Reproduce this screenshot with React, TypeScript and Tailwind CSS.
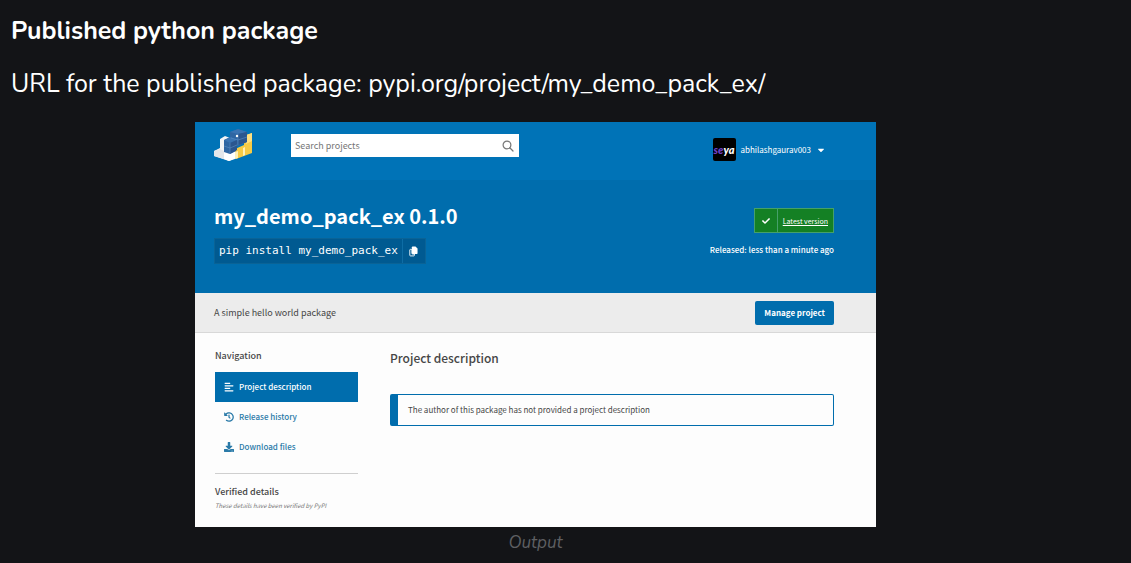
import type { ReactNode } from "react";
import { FaAlignLeft, FaCaretDown, FaCheck, FaDownload, FaHistory } from "react-icons/fa";

function PyPILogo() {
  return (
    <svg viewBox="0 0 40 34" className="h-[34px] w-10 shrink-0" aria-label="PyPI" role="img">
      <path d="M1 23 L7 20 V11 L12 8 L22 12 V31 L16 33 L1 28Z" fill="#f3f4f6" />
      <path d="M1 23 L7 21 L11 23 V31 L1 28Z" fill="#e3e6ea" />
      <path d="M11 24 L17 26 L23 23 V30 L16 33 L11 31Z" fill="#ffffff" />
      <path d="M22 21 L31 17 V8 L39 5 V25 L23 31Z" fill="#f7cb45" />
      <path d="M33 7 L39 5 V13 L33 16Z" fill="#ffdf80" />
      <path d="M22 24 L25 23 V30 L22 31Z M30 20 L32 19 V27 L30 28Z" fill="#fff0b8" />
      <path d="M11 12 L17 9 V4 L25 1 L34 4 V14 L23 19 V23 L17 26 L11 24Z" fill="#2f66a3" />
      <path d="M11 12 L18 9 L24 12 L17 15Z M17 4 L25 1 L34 4 L25 6Z" fill="#3b74b3" />
      <path d="M17 15 L24 12 V22 L17 26Z M25 6 L34 4 V14 L25 17Z" fill="#2b568f" />
      <path d="M11 18 L17 20 L24 17 M17 15 V26 M18 10 L25 12 L34 9 M25 6 V17" fill="none" stroke="#5b8fc4" strokeWidth=".6" />
      <circle cx="24" cy="8" r="1.2" fill="#fff" />
    </svg>
  );
}

function SearchIcon() {
  return (
    <svg viewBox="0 0 12 12" className="size-3" fill="none" stroke="#777" strokeWidth="1.2" strokeLinecap="round">
      <circle cx="5" cy="5" r="3.9" />
      <path d="M8 8 L11 11" />
    </svg>
  );
}

function CopyIcon() {
  return (
    <svg viewBox="0 0 10 12" className="h-[11px] w-[9px]" fill="#fff">
      <path d="M4 0.5 H7.2 L9.5 2.8 V8 Q9.5 8.8 8.7 8.8 H4 Q3.2 8.8 3.2 8 V1.3 Q3.2 .5 4 .5Z" />
      <path
        d="M1.6 3.6 H3.2 V8 Q3.2 8.8 4 8.8 H6 V10.2 Q6 10.9 5.3 10.9 H1.6 Q.9 10.9 .9 10.2 V4.3 Q.9 3.6 1.6 3.6Z"
        fill="none"
        stroke="#fff"
        strokeWidth="1"
      />
    </svg>
  );
}

function NavItem({ icon, children, active = false }: { icon: ReactNode; children: ReactNode; active?: boolean }) {
  return (
    <li>
      <a
        href="#"
        className={
          active
            ? "flex h-[30px] items-center gap-[5px] bg-[#006dad] pb-px pl-[9px] text-white"
            : "flex h-[30px] items-center gap-[5px] pb-px pl-[9px] text-[#2a7aa8]"
        }
      >
        {icon}
        {children}
      </a>
    </li>
  );
}

function ProjectPage() {
  return (
    <div className="bg-[#fdfdfd] font-['Noto_Sans_CJK_SC','Noto_Sans',sans-serif] text-[8px] leading-3 text-[#464646]">
      <header className="flex h-[58px] items-start bg-[#0073b7] pr-[50px] pl-[18px]">
        <a href="#" className="mt-[6px]">
          <PyPILogo />
        </a>
        <form className="mt-3 ml-[38px] flex h-[23px] w-[228px] items-center bg-white pr-[5px] pl-1">
          <input
            type="text"
            aria-label="Search projects"
            placeholder="Search projects"
            className="min-w-0 flex-1 text-[9px] leading-3 outline-none placeholder:text-[#757575]"
          />
          <button type="button" aria-label="Search">
            <SearchIcon />
          </button>
        </form>
        <button type="button" className="mt-4 ml-auto flex items-center gap-[5px] text-white">
          <span className="flex size-[23px] items-center justify-center rounded-xs bg-black font-['Lato',sans-serif] text-[11px] font-black text-white italic">
            <span className="text-[#7040c8]">se</span>ya
          </span>
          abhilashgaurav003
          <FaCaretDown className="size-[10px]" />
        </button>
      </header>

      <section className="flex h-[113px] justify-between bg-[#006dad] pr-[42px] pl-[19px] text-white">
        <div className="flex flex-col items-start pt-[22px]">
          <h1 className="text-[20px] leading-7 font-bold">my_demo_pack_ex 0.1.0</h1>
          <div className="mt-2 flex h-[26px] items-stretch border border-[#0a6396] bg-[#005a91]">
            <code className="flex items-center px-1 font-['DejaVu_Sans_Mono',monospace] text-[11px]">
              pip install my_demo_pack_ex
            </code>
            <button type="button" aria-label="Copy" className="flex w-[23px] items-center justify-center border-l border-[#0e6da5]">
              <CopyIcon />
            </button>
          </div>
        </div>
        <div className="flex flex-col items-end pt-7">
          <a href="#" className="flex h-[25px] items-stretch border border-[#45a06a] bg-[#148024]">
            <span className="flex w-[23px] items-center justify-center border-r border-[#45a06a]">
              <FaCheck className="size-2" />
            </span>
            <span className="flex items-center px-[5px] text-[7px] underline">Latest version</span>
          </a>
          <p className="mt-[11px] font-medium">Released: less than a minute ago</p>
        </div>
      </section>

      <section className="flex h-10 items-center justify-between border-b border-[#d8d8d8] bg-[#ececec] pr-[42px] pl-[19px]">
        <p className="text-[9px]">A simple hello world package</p>
        <button type="button" className="h-6 rounded-xs bg-[#006dad] px-[9px] font-bold text-white">
          Manage project
        </button>
      </section>

      <div className="flex h-[194px] pr-[42px] pl-5">
        <aside className="w-[143px] shrink-0 pt-[17px]">
          <h2 className="text-[9px] font-medium">Navigation</h2>
          <nav className="mt-[10px] border-b border-[#cfcfcf] pb-[11px]">
            <ul className="font-medium">
              <NavItem active icon={<FaAlignLeft className="size-[10px]" />}>
                Project description
              </NavItem>
              <NavItem icon={<FaHistory className="size-[10px]" />}>Release history</NavItem>
              <NavItem icon={<FaDownload className="size-[10px]" />}>Download files</NavItem>
            </ul>
          </nav>
          <h2 className="mt-3 text-[9px] font-medium">Verified details</h2>
          <p className="mt-[2px] text-[6px] text-[#777] italic">These details have been verified by PyPI</p>
        </aside>
        <main className="ml-8 flex-1 pt-[17px]">
          <h2 className="text-[12px] leading-4 font-medium">Project description</h2>
          <div className="mt-7 flex h-8 items-center rounded-xs border border-l-8 border-[#006dad] pl-[10px]">
            The author of this package has not provided a project description
          </div>
        </main>
      </div>
    </div>
  );
}

export default function App() {
  return (
    <div className="min-h-screen bg-[#131417] pr-[71px] pl-[11px] font-['Nunito','Lato',sans-serif] text-white">
      <h2 className="pt-[13px] text-[25px] leading-9 font-bold">Published python package</h2>
      <p className="mt-[17px] text-[25px] leading-9">
        URL for the published package: pypi.org/project/my_demo_pack_ex/
      </p>
      <figure className="mx-auto mt-5 max-w-[681px]">
        <ProjectPage />
        <figcaption className="pt-1 text-center text-[17px] leading-6 text-[#5f6063] italic">Output</figcaption>
      </figure>
    </div>
  );
}
